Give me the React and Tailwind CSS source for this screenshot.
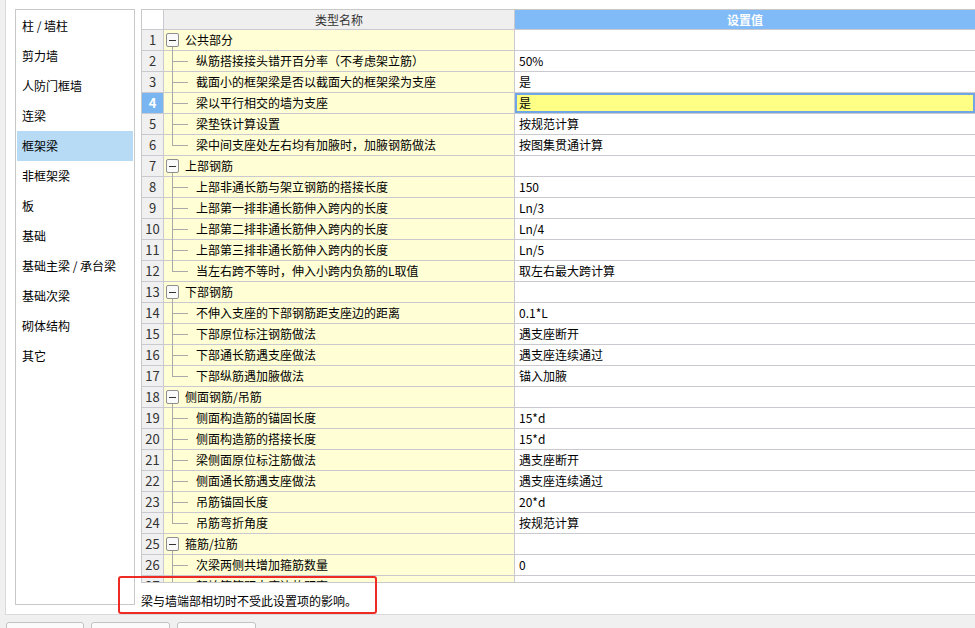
import clsx from 'clsx'

const categories = [
  '柱 / 墙柱',
  '剪力墙',
  '人防门框墙',
  '连梁',
  '框架梁',
  '非框架梁',
  '板',
  '基础',
  '基础主梁 / 承台梁',
  '基础次梁',
  '砌体结构',
  '其它',
]

// group rows carry no value; `last` closes the tree branch
const rows = [
  { group: true, name: '公共部分' },
  { name: '纵筋搭接接头错开百分率（不考虑架立筋）', value: '50%' },
  { name: '截面小的框架梁是否以截面大的框架梁为支座', value: '是' },
  { name: '梁以平行相交的墙为支座', value: '是', selected: true },
  { name: '梁垫铁计算设置', value: '按规范计算' },
  { name: '梁中间支座处左右均有加腋时，加腋钢筋做法', value: '按图集贯通计算', last: true },
  { group: true, name: '上部钢筋' },
  { name: '上部非通长筋与架立钢筋的搭接长度', value: '150' },
  { name: '上部第一排非通长筋伸入跨内的长度', value: 'Ln/3' },
  { name: '上部第二排非通长筋伸入跨内的长度', value: 'Ln/4' },
  { name: '上部第三排非通长筋伸入跨内的长度', value: 'Ln/5' },
  { name: '当左右跨不等时，伸入小跨内负筋的L取值', value: '取左右最大跨计算', last: true },
  { group: true, name: '下部钢筋' },
  { name: '不伸入支座的下部钢筋距支座边的距离', value: '0.1*L' },
  { name: '下部原位标注钢筋做法', value: '遇支座断开' },
  { name: '下部通长筋遇支座做法', value: '遇支座连续通过' },
  { name: '下部纵筋遇加腋做法', value: '锚入加腋', last: true },
  { group: true, name: '侧面钢筋/吊筋' },
  { name: '侧面构造筋的锚固长度', value: '15*d' },
  { name: '侧面构造筋的搭接长度', value: '15*d' },
  { name: '梁侧面原位标注筋做法', value: '遇支座断开' },
  { name: '侧面通长筋遇支座做法', value: '遇支座连续通过' },
  { name: '吊筋锚固长度', value: '20*d' },
  { name: '吊筋弯折角度', value: '按规范计算', last: true },
  { group: true, name: '箍筋/拉筋' },
  { name: '次梁两侧共增加箍筋数量', value: '0' },
  { name: '起始箍筋距支座边的距离', value: '50' },
]

function SideList() {
  return (
    <div className="h-[596px] w-[120px] shrink-0 border border-[#c9c9c9] p-px">
      {categories.map((c) => (
        <div
          key={c}
          className={clsx(
            'h-[30px] pl-[5px] leading-[30px] whitespace-nowrap',
            c === '框架梁' && 'bg-[#b7dbf5]'
          )}
        >
          {c}
        </div>
      ))}
    </div>
  )
}

function TreeMarks({ row }) {
  if (row.group) {
    return (
      <>
        <span className="absolute left-[2px] top-[3px] flex h-[14px] w-[13px] items-center justify-center rounded-[2px] border border-[#8f8f8f] bg-[#fafafa]">
          <span className="h-px w-[7px] bg-[#333]" />
        </span>
        <span className="absolute left-[8px] top-[17px] bottom-[-1px] w-px bg-[#aaaaaa]" />
      </>
    )
  }
  return (
    <>
      <span
        className={clsx(
          'absolute left-[8px] top-0 w-px bg-[#aaaaaa]',
          row.last ? 'h-[10px]' : 'bottom-[-1px]'
        )}
      />
      <span className="absolute left-[8px] top-[10px] h-px w-[16px] bg-[#aaaaaa]" />
    </>
  )
}

function Grid() {
  return (
    <div className="h-[574px] overflow-hidden border border-r-0 border-[#c9c9c9]">
      <div className="flex h-[20px] border-b border-[#c9c9cf] leading-[19px]">
        <div className="w-[22px] shrink-0 border-r border-[#c9c9cf] bg-white" />
        <div className="w-[351px] shrink-0 border-r border-[#c9c9cf] bg-[#efefef] text-center text-[#333]">
          类型名称
        </div>
        <div className="flex-1 bg-[#80bbf7] text-center font-bold text-white">设置值</div>
      </div>
      {rows.map((row, i) => (
        <div key={i} className="flex h-[21px] border-b border-[#c9c9cf] leading-[20px]">
          <div
            className={clsx(
              'w-[22px] shrink-0 border-r border-[#c9c9cf] text-center text-[13px]',
              row.selected ? 'bg-[#79b5f1] font-bold text-white' : 'bg-[#f0f0f0] text-[#333]'
            )}
          >
            {i + 1}
          </div>
          <div
            className={clsx(
              'relative w-[351px] shrink-0 border-r border-[#c9c9cf] bg-[#fffed4] whitespace-nowrap',
              row.group ? 'pl-[21px]' : 'pl-[32px]'
            )}
          >
            <TreeMarks row={row} />
            {row.name}
          </div>
          <div
            className={clsx(
              'flex-1 pl-[4px] whitespace-nowrap',
              row.selected ? 'bg-[#ffff85] shadow-[inset_0_0_0_2px_#6fa6e6]' : 'bg-white'
            )}
          >
            {row.value}
          </div>
        </div>
      ))}
    </div>
  )
}

export default function App() {
  return (
    <div className="relative h-[628px] w-[975px] overflow-hidden bg-[#f0f0f0] font-['Noto_Sans_CJK_SC',sans-serif] text-[12px] text-black">
      <div className="ml-[5px] flex h-[615px] gap-[6px] border-b border-l border-[#d9d9d9] bg-white pl-[9px] pt-[9px]">
        <SideList />
        <div className="flex min-w-0 flex-1 flex-col">
          <Grid />
          <p className="pt-[9px] leading-[17px]">梁与墙端部相切时不受此设置项的影响。</p>
        </div>
      </div>
      <div className="mt-[7px] flex gap-[7px] pl-[6px]">
        <div className="h-[24px] w-[78px] rounded-t-[3px] border border-[#c2c2c2] bg-[#fbfbfb]" />
        <div className="h-[24px] w-[79px] rounded-t-[3px] border border-[#c2c2c2] bg-[#fbfbfb]" />
        <div className="h-[24px] w-[79px] rounded-t-[3px] border border-[#c2c2c2] bg-[#fbfbfb]" />
      </div>
      {/* red annotation box */}
      <div className="absolute left-[118px] top-[576px] h-[38px] w-[259px] rounded-[3px] border-2 border-[#ee2a24]" />
    </div>
  )
}
